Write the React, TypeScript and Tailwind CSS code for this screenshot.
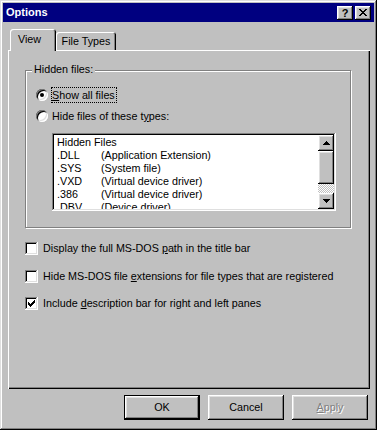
import React from "react";

const raised =
  "shadow-[inset_-1px_-1px_0_#000,inset_1px_1px_0_#fff,inset_-2px_-2px_0_#808080,inset_2px_2px_0_#dfdfdf]";
const sunken =
  "shadow-[inset_-1px_-1px_0_#fff,inset_1px_1px_0_#808080,inset_-2px_-2px_0_#dfdfdf,inset_2px_2px_0_#000]";

function Radio({ checked }: { checked?: boolean }) {
  return (
    <div className="w-[12px] h-[12px] rounded-full bg-white shrink-0 flex items-center justify-center shadow-[inset_1px_1px_0_#808080,inset_-1px_-1px_0_#fff,inset_2px_2px_0_#000,inset_-2px_-2px_0_#dfdfdf]">
      {checked && <div className="w-[4px] h-[4px] rounded-full bg-black" />}
    </div>
  );
}

function CheckBox({ checked }: { checked?: boolean }) {
  const px: [number, number][] = [
    [9, 3],
    [8, 4], [9, 4],
    [3, 5], [7, 5], [8, 5], [9, 5],
    [3, 6], [4, 6], [6, 6], [7, 6], [8, 6],
    [3, 7], [4, 7], [5, 7], [6, 7], [7, 7],
    [4, 8], [5, 8], [6, 8],
    [5, 9],
  ];
  return (
    <div className={`w-[13px] h-[13px] bg-white shrink-0 ${sunken}`}>
      {checked && (
        <svg width="13" height="13" viewBox="0 0 13 13" shapeRendering="crispEdges">
          {px.map(([x, y], i) => (
            <rect key={i} x={x} y={y} width="1" height="1" fill="#000" />
          ))}
        </svg>
      )}
    </div>
  );
}

function Arrow({ up }: { up?: boolean }) {
  const rows = up
    ? [[3, 3], [2, 5], [1, 7], [0, 9]]
    : [[0, 9], [1, 7], [2, 5], [3, 3]];
  return (
    <svg width="9" height="4" viewBox="0 0 9 4" shapeRendering="crispEdges">
      {rows.map(([x, w], i) => (
        <rect key={i} x={x} y={i} width={w - x * 2 + x} height="1" fill="#000" />
      ))}
    </svg>
  );
}

function ScrollBtn({ up }: { up?: boolean }) {
  return (
    <div className={`w-[16px] h-[16px] bg-[#c0c0c0] flex items-center justify-center ${raised}`}>
      <svg width="7" height="4" viewBox="0 0 7 4" shapeRendering="crispEdges">
        {up ? (
          <>
            <rect x="3" y="0" width="1" height="1" fill="#000" />
            <rect x="2" y="1" width="3" height="1" fill="#000" />
            <rect x="1" y="2" width="5" height="1" fill="#000" />
            <rect x="0" y="3" width="7" height="1" fill="#000" />
          </>
        ) : (
          <>
            <rect x="0" y="0" width="7" height="1" fill="#000" />
            <rect x="1" y="1" width="5" height="1" fill="#000" />
            <rect x="2" y="2" width="3" height="1" fill="#000" />
            <rect x="3" y="3" width="1" height="1" fill="#000" />
          </>
        )}
      </svg>
    </div>
  );
}

const rows: [string, string][] = [
  [".DLL", "(Application Extension)"],
  [".SYS", "(System file)"],
  [".VXD", "(Virtual device driver)"],
  [".386", "(Virtual device driver)"],
  [".DBV", "(Device driver)"],
];

export default function App() {
  void Arrow;
  return (
    <div
      className={`w-[377px] h-[430px] bg-[#c0c0c0] p-[3px] flex flex-col font-['Liberation_Sans',Arial,sans-serif] text-[10.75px] leading-[13px] text-black select-none shadow-[inset_-1px_-1px_0_#000,inset_1px_1px_0_#dfdfdf,inset_-2px_-2px_0_#808080,inset_2px_2px_0_#fff]`}
    >
      {/* Title bar */}
      <div className="h-[19px] bg-[#000080] flex items-center pl-[3px] pr-[3px] shrink-0">
        <span className="text-white font-bold text-[11px]">Options</span>
        <div className="ml-auto flex gap-[2px]">
          <div className={`w-[16px] h-[14px] bg-[#c0c0c0] flex items-center justify-center ${raised}`}>
            <span className="font-bold text-[11px] leading-[11px] mt-[1px]">?</span>
          </div>
          <div className={`w-[16px] h-[14px] bg-[#c0c0c0] flex items-center justify-center ${raised}`}>
            <svg width="8" height="7" viewBox="0 0 8 7" shapeRendering="crispEdges">
              {[0, 1, 2, 3, 4, 5, 6].map((i) => (
                <React.Fragment key={i}>
                  <rect x={i < 3 ? i : i + 0} y={i} width="2" height="1" fill="#000" />
                  <rect x={6 - i} y={i} width="2" height="1" fill="#000" />
                </React.Fragment>
              ))}
            </svg>
          </div>
        </div>
      </div>

      {/* Body */}
      <div className="flex flex-col ml-[5px] mr-[4px]">
        {/* Tabs */}
        <div className="flex items-end h-[21px] mt-[7px] pl-[2px]">
          <div className="relative z-10 w-[46px] h-[22px] -mb-[1px] bg-[#c0c0c0] rounded-t-[3px] pl-[8px] pt-[4px] shadow-[inset_1px_1px_0_#fff,inset_-1px_0_0_#000,inset_-2px_0_0_#808080]">
            View
          </div>
          <div className="w-[60px] h-[18px] bg-[#c0c0c0] rounded-t-[3px] pt-[3px] text-center shadow-[inset_1px_1px_0_#fff,inset_-1px_0_0_#000,inset_-2px_0_0_#808080]">
            File Types
          </div>
        </div>

        {/* Panel */}
        <div className="relative h-[339px] bg-[#c0c0c0] flex flex-col shadow-[inset_1px_1px_0_#fff,inset_-1px_-1px_0_#000,inset_-2px_-2px_0_#808080]">
          {/* Group box */}
          <div className="relative ml-[17px] mt-[20px] w-[326px] h-[158px] border border-[#808080] shadow-[inset_1px_1px_0_#fff,1px_1px_0_#fff] pt-[16px] pl-[10px] flex flex-col">
            <div className="absolute left-[6px] -top-[8px] px-[2px] bg-[#c0c0c0]">Hidden files:</div>

            <div className="flex items-center h-[16px]">
              <Radio checked />
              <span className="ml-[3px] h-[16px] leading-[14px] border border-dotted border-black pr-[1px]">
                <u className="underline-offset-[1px]">S</u>how all files
              </span>
            </div>
            <div className="flex items-center h-[16px] mt-[5px]">
              <Radio />
              <span className="ml-[3px] h-[16px] leading-[14px] border border-transparent pr-[1px]">
                Hide files of these t<u className="underline-offset-[1px]">y</u>pes:
              </span>
            </div>

            {/* List */}
            <div className={`ml-[16px] mt-[9px] w-[284px] h-[78px] bg-white p-[2px] flex ${sunken}`}>
              <div className="flex-1 overflow-hidden pl-[3px] pt-[1px]">
                <div className="h-[13px] leading-[13px] whitespace-nowrap">Hidden Files</div>
                {rows.map(([ext, desc], i) => (
                  <div key={i} className="h-[13px] leading-[13px] flex whitespace-nowrap">
                    <span className="w-[44px] shrink-0">{ext}</span>
                    <span>{desc}</span>
                  </div>
                ))}
              </div>
              <div className="w-[16px] flex flex-col">
                <ScrollBtn up />
                <div className={`h-[33px] bg-[#c0c0c0] ${raised}`} />
                <div className="flex-1 bg-[image:repeating-conic-gradient(#c0c0c0_0%_25%,#ffffff_0%_50%)] bg-[length:2px_2px]" />
                <ScrollBtn />
              </div>
            </div>
          </div>

          {/* Checkboxes */}
          <div className="flex items-center h-[16px] ml-[17px] mt-[12px]">
            <CheckBox />
            <span className="ml-[5px] whitespace-nowrap">
              Display the full MS-DOS <u className="underline-offset-[1px]">p</u>ath in the title bar
            </span>
          </div>
          <div className="flex items-center h-[16px] ml-[17px] mt-[12px]">
            <CheckBox />
            <span className="ml-[5px] whitespace-nowrap">
              Hide MS-DOS file <u className="underline-offset-[1px]">e</u>xtensions for file types that are registered
            </span>
          </div>
          <div className="flex items-center h-[16px] ml-[17px] mt-[11px]">
            <CheckBox checked />
            <span className="ml-[5px] whitespace-nowrap">
              Include <u className="underline-offset-[1px]">d</u>escription bar for right and left panes
            </span>
          </div>
        </div>

        {/* Buttons */}
        <div className="flex justify-end gap-[8px] mt-[6px] pr-[2px]">
          <div className="w-[76px] h-[25px] border border-black">
            <div className={`w-full h-full bg-[#c0c0c0] flex items-center justify-center ${raised}`}>OK</div>
          </div>
          <div className={`w-[76px] h-[25px] bg-[#c0c0c0] flex items-center justify-center ${raised}`}>Cancel</div>
          <div className={`w-[76px] h-[25px] bg-[#c0c0c0] flex items-center justify-center text-[#808080] [text-shadow:1px_1px_0_#fff] ${raised}`}>
            <span>
              <u className="underline-offset-[1px]">A</u>pply
            </span>
          </div>
        </div>
      </div>
    </div>
  );
}
